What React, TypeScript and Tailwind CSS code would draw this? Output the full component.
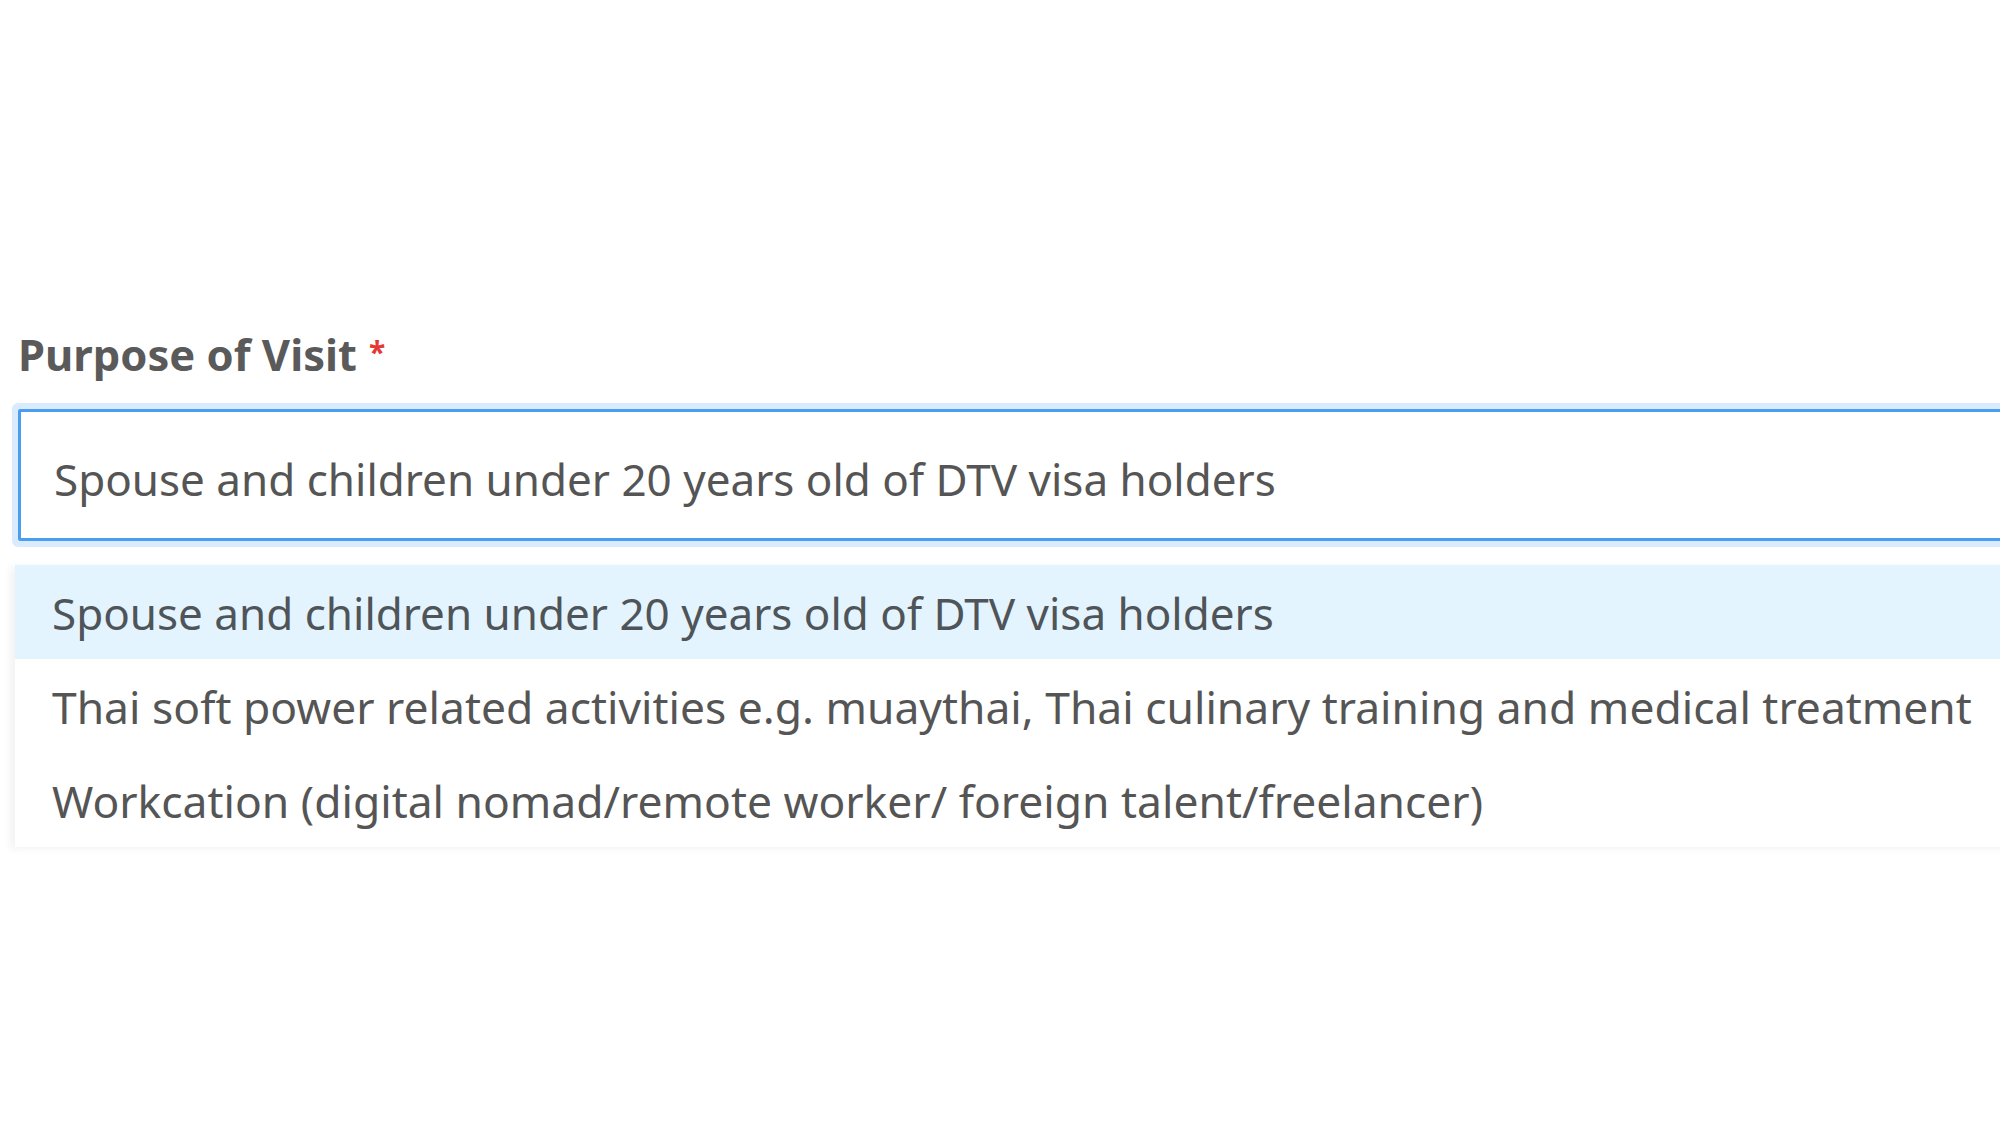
const options = [
  "Spouse and children under 20 years old of DTV visa holders",
  "Thai soft power related activities e.g. muaythai, Thai culinary training and medical treatment",
  "Workcation (digital nomad/remote worker/ foreign talent/freelancer)",
];

export default function App() {
  const selected = options[0];
  return (
    <div
      className="h-[1125px] w-[2000px] overflow-hidden bg-white text-[#555555]"
      style={{ fontFamily: '"Noto Sans", "Open Sans", sans-serif' }}
    >
      <div className="w-[2200px] pl-[18px] pt-[324px]">
        <label className="flex items-start gap-[12px] text-[43.5px] font-bold leading-[60px] text-[#5a5a5a]">
          Purpose of Visit
          <span className="mt-[-2px] text-[30px] text-[#e53935]">*</span>
        </label>

        <div className="mt-[25px] rounded-[2px] border-[3px] border-[#4a9ef2] shadow-[0_0_0_6px_#d9ebfc]">
          <div className="flex h-[126px] items-center pl-[33px] pt-[8px] text-[44px]">{selected}</div>
        </div>

        <ul className="-ml-[3px] mt-[24px] bg-white shadow-[-5px_2px_8px_rgba(0,0,0,0.05)]">
          {options.map((o) => (
            <li
              key={o}
              className={
                o === selected
                  ? "flex h-[94px] items-center bg-[#e4f4fe] pl-[37px] pt-[2px] text-[44px] text-[#4f5459]"
                  : "flex h-[94px] items-center pl-[37px] pt-[2px] text-[44.4px]"
              }
            >
              {o}
            </li>
          ))}
        </ul>
      </div>
    </div>
  );
}
